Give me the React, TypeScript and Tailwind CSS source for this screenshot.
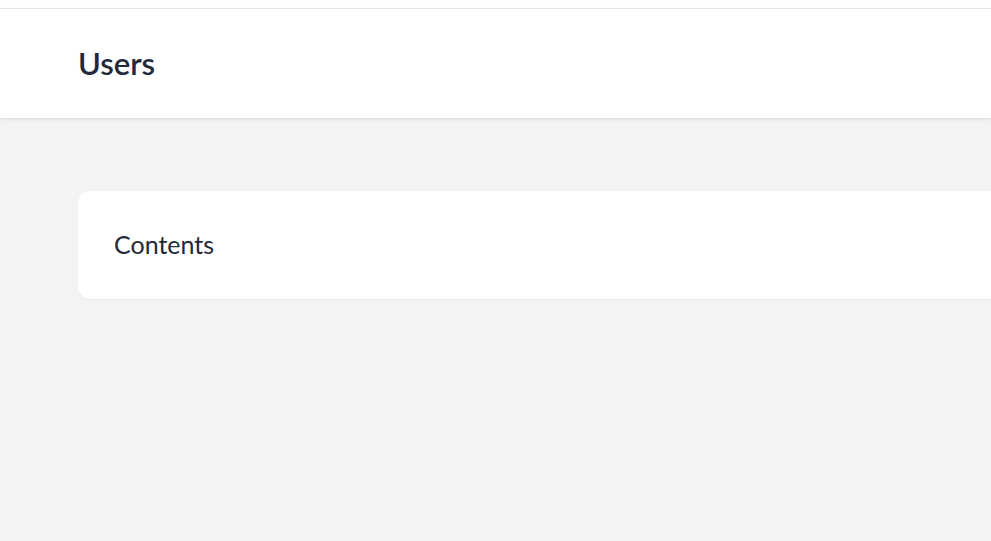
export default function App() {
  return (
    <div className="min-h-screen bg-[#f3f3f5] overflow-hidden" style={{ fontFamily: "Lato, 'Noto Sans', sans-serif" }}>
      <div className="h-[9px] bg-white border-b border-gray-200" />
      <header className="bg-white shadow-[0_1px_3px_rgba(0,0,0,0.12)]">
        <div className="h-[109px] flex items-center pl-[78px]">
          <h1 className="text-[31px] font-semibold text-[#1f2937] leading-none">Users</h1>
        </div>
      </header>
      <main className="pt-[73px] pl-[78px]">
        <div className="w-[1000px] h-[108px] bg-white rounded-xl shadow-[0_1px_2px_rgba(0,0,0,0.06)] flex items-center px-9">
          <p className="text-[25px] text-[#1f2937]">Contents</p>
        </div>
      </main>
    </div>
  );
}
